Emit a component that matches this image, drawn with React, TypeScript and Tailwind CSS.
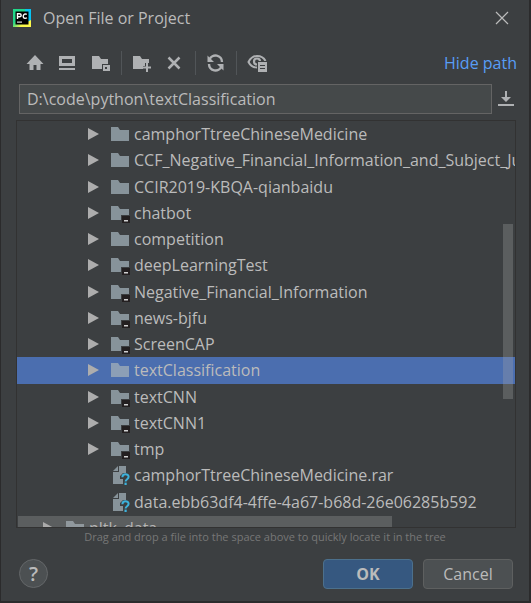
import { useState } from 'react';

type Kind = 'folder' | 'project' | 'file';
type Entry = { name: string; kind: Kind; parent?: boolean };

const entries: Entry[] = [
  { name: 'camphorTtreeChineseMedicine', kind: 'folder' },
  { name: 'CCF_Negative_Financial_Information_and_Subject_Judgment', kind: 'folder' },
  { name: 'CCIR2019-KBQA-qianbaidu', kind: 'folder' },
  { name: 'chatbot', kind: 'project' },
  { name: 'competition', kind: 'folder' },
  { name: 'deepLearningTest', kind: 'project' },
  { name: 'Negative_Financial_Information', kind: 'project' },
  { name: 'news-bjfu', kind: 'project' },
  { name: 'ScreenCAP', kind: 'project' },
  { name: 'textClassification', kind: 'folder' },
  { name: 'textCNN', kind: 'project' },
  { name: 'textCNN1', kind: 'project' },
  { name: 'tmp', kind: 'project' },
  { name: 'camphorTtreeChineseMedicine.rar', kind: 'file' },
  { name: 'data.ebb63df4-4ffe-4a67-b68d-26e06285b592', kind: 'file' },
  { name: 'nltk_data', kind: 'folder', parent: true },
];

function EntryIcon({ kind, active }: { kind: Kind; active: boolean }) {
  const fill = active ? '#8c9fb6' : '#87939a';
  if (kind === 'file') {
    return (
      <svg width="20" height="20" viewBox="0 0 20 20" className="shrink-0" aria-hidden="true">
        <path d="M9 1h7v7h-3l-3 3v3h3v5H3V7h6z" fill={fill} />
        <path d="M8 1v5H3z" fill={fill} />
        <path d="M12.400 12.300c0-4.200 6.200-3.800 6.200-.5 0 2.400-3 2.400-3 4.800" fill="none" stroke="#3db2dc" strokeWidth="2" />
        <path d="M14.500 17.600h2.200V20h-2.200z" fill="#3db2dc" />
      </svg>
    );
  }
  return (
    <svg width="20" height="20" viewBox="0 0 20 20" className="shrink-0" aria-hidden="true">
      <path d="M1 3h7l2 3h9v11H1z" fill={fill} />
      {kind === 'project' && (
        <>
          <path d="M11 12h9v8h-9z" fill="#3c3f41" />
          <path d="M12 13h8v7h-8z" fill="#231f20" />
          <path d="M14 17h4v1.500h-4z" fill="#d0d0d0" />
        </>
      )}
    </svg>
  );
}

function Tool({ label, children }: { label: string; children: React.ReactNode }) {
  return (
    <button type="button" aria-label={label} className="size-5 shrink-0">
      <svg width="20" height="20" viewBox="0 0 20 20" fill="#afb1b3" aria-hidden="true">
        {children}
      </svg>
    </button>
  );
}

function Divider() {
  return <div className="h-6 w-px shrink-0 bg-[#515558]" />;
}

export default function App() {
  const [path, setPath] = useState('D:\\code\\python\\textClassification');
  const [selected, setSelected] = useState('textClassification');

  return (
    <main className="flex h-screen flex-col overflow-hidden border-r-2 border-b-2 border-l border-[#2b2b2c] bg-[#3c3f41] font-['Open_Sans','Noto_Sans',sans-serif] text-base text-[#bbbbbb]">
      <header className="flex h-9 shrink-0 items-center pr-5 pl-3">
        <svg width="18" height="18" viewBox="0 0 18 18" aria-hidden="true">
          <defs>
            <linearGradient id="brand" x1="0" y1="0" x2="1" y2="1">
              <stop offset="0" stopColor="#21d789" />
              <stop offset=".4" stopColor="#21d789" />
              <stop offset=".7" stopColor="#fcf84a" />
              <stop offset="1" stopColor="#fcf84a" />
            </linearGradient>
          </defs>
          <path d="M0 0h18v18H0z" fill="url(#brand)" />
          <path d="M12 0h6v11l-4 2z" fill="#07c3f2" />
          <path d="M2.500 2.500h13v13h-13z" fill="#000" />
          <path d="M4.500 10V4.700H6.500a1.700 1.500 0 0 1 0 3H4.500M13.800 5.400c-3.600-2-5 3.800-1.700 4 .8 0 1.300-.2 1.800-.6" fill="none" stroke="#fff" strokeWidth="1.400" />
          <path d="M4 12.500h5v1.200H4z" fill="#ddd" />
        </svg>
        <h1 className="ml-3 flex-1">Open File or Project</h1>
        <button type="button" aria-label="Close">
          <svg width="14" height="14" viewBox="0 0 14 14" aria-hidden="true">
            <path d="M1 1l12 12M13 1L1 13" stroke="#bbbbbb" strokeWidth="1.200" />
          </svg>
        </button>
      </header>

      <div className="mt-2 flex h-9 shrink-0 items-center justify-between pr-3 pb-1 pl-6 pt-1.5">
        <div className="flex items-center gap-2.5">
          <div className="flex gap-[13px]">
            <Tool label="Home">
              <path d="M10 2L1.500 11H4.500v6h4v-5h3v5h4v-6h3z" />
            </Tool>
            <Tool label="Desktop">
              <path d="M1 3h16v10H1zM4 6v4h10V6zM1 15h16v2H1z" fillRule="evenodd" />
            </Tool>
            <Tool label="Project directory">
              <path d="M1 3h7l2 3h7v5h-6v5H1z" />
              <path d="M12 12h7v6h-7zM14 14v2h2v-2z" fillRule="evenodd" />
            </Tool>
          </div>
          <Divider />
          <div className="flex gap-[13px]">
            <Tool label="New folder">
              <path d="M1 3h7l2 3h7v4h-4v3h-2v3H1z" />
              <path d="M14 10h2v3.500h3v2h-3V19h-2v-3.500h-3v-2h3z" />
            </Tool>
            <Tool label="Delete">
              <path d="M3.500 4.500l11 11M14.500 4.500l-11 11" stroke="#afb1b3" strokeWidth="2.500" />
            </Tool>
          </div>
          <Divider />
          <Tool label="Refresh">
            <path d="M3.500 6.500A6.500 6.500 0 0 1 16 9M15.500 13.500A6.500 6.500 0 0 1 3 11" fill="none" stroke="#afb1b3" strokeWidth="2.400" />
            <path d="M1.500 2.500v6.500h6.500zM17.500 17.500v-6.500h-6.500z" />
          </Tool>
          <Divider />
          <Tool label="Show hidden files">
            <path d="M10 14.500C6 14.500 3 12 1.500 9c2-4 5-6 8.500-6s7 2 8.500 5" fill="none" stroke="#afb1b3" strokeWidth="2" />
            <circle cx="10" cy="8.500" r="3" fill="none" stroke="#afb1b3" strokeWidth="2.200" />
            <path d="M10 8h10v12H10z" fill="#3c3f41" />
            <path d="M11 9h9v10h-9z" />
            <path d="M13 12.500h5M13 15.500h5" stroke="#3c3f41" strokeWidth="1" />
          </Tool>
        </div>
        <a href="#path" className="text-[#589df6]">Hide path</a>
      </div>

      <div className="mt-1 flex h-[30px] shrink-0 items-center pr-[15px] pl-[18px]">
        <input
          id="path"
          aria-label="Path"
          value={path}
          onChange={(e) => setPath(e.target.value)}
          className="h-[30px] min-w-0 flex-1 border border-[#646464] bg-[#45494a] px-[7px] outline-none"
        />
        <button type="button" aria-label="Recent paths" className="ml-1.5">
          <svg width="16" height="18" viewBox="0 0 16 18" fill="#afb1b3" aria-hidden="true">
            <path d="M7 1h2v6h4l-5 5-5-5h4zM0 14h16v2H0z" />
          </svg>
        </button>
      </div>

      <section className="relative mt-1.5 mr-[13px] ml-[15px] min-h-0 flex-1 overflow-hidden border border-[#323232]">
        <ul role="listbox" aria-label="Files" className="grid h-[420px] auto-rows-fr">
          {entries.map(({ name, kind, parent }) => (
            <li
              key={name}
              role="option"
              aria-selected={selected === name}
              onClick={() => setSelected(name)}
              className={`flex min-h-0 items-center whitespace-nowrap ${parent ? 'pl-[25px]' : 'pl-[70px]'} ${selected === name ? 'bg-[#4b6eaf]' : ''}`}
            >
              <svg width="12" height="12" viewBox="0 0 12 12" className="mr-[11px] shrink-0" aria-hidden="true">
                {kind !== 'file' && <path d="M1 0l11 6-11 6z" fill="#adadad" />}
              </svg>
              <EntryIcon kind={kind} active={selected === name} />
              <span className="ml-1">{name}</span>
            </li>
          ))}
        </ul>
        <div className="absolute top-[103px] right-[2px] h-[175px] w-[10px] bg-[#a6a6a6]/30" />
        <div className="absolute bottom-0 left-px h-[11px] w-3/4 bg-[#a6a6a6]/30" />
      </section>

      <p className="h-[19px] shrink-0 text-center text-[11px] leading-[18px] text-[#777777]">
        Drag and drop a file into the space above to quickly locate it in the tree
      </p>

      <footer className="flex h-[54px] shrink-0 items-center gap-2.5 pr-4 pb-px pl-[18px]">
        <button type="button" aria-label="Help" className="mr-auto flex size-[29px] items-center justify-center rounded-full border border-[#646769] bg-[#4c5052] text-xl font-semibold">
          ?
        </button>
        <button type="button" className="h-[30px] w-[90px] rounded border border-[#4c708c] bg-[#365880] font-bold">OK</button>
        <button type="button" className="h-[30px] w-[90px] rounded border border-[#5e6060] bg-[#4c5052]">Cancel</button>
      </footer>
    </main>
  );
}
